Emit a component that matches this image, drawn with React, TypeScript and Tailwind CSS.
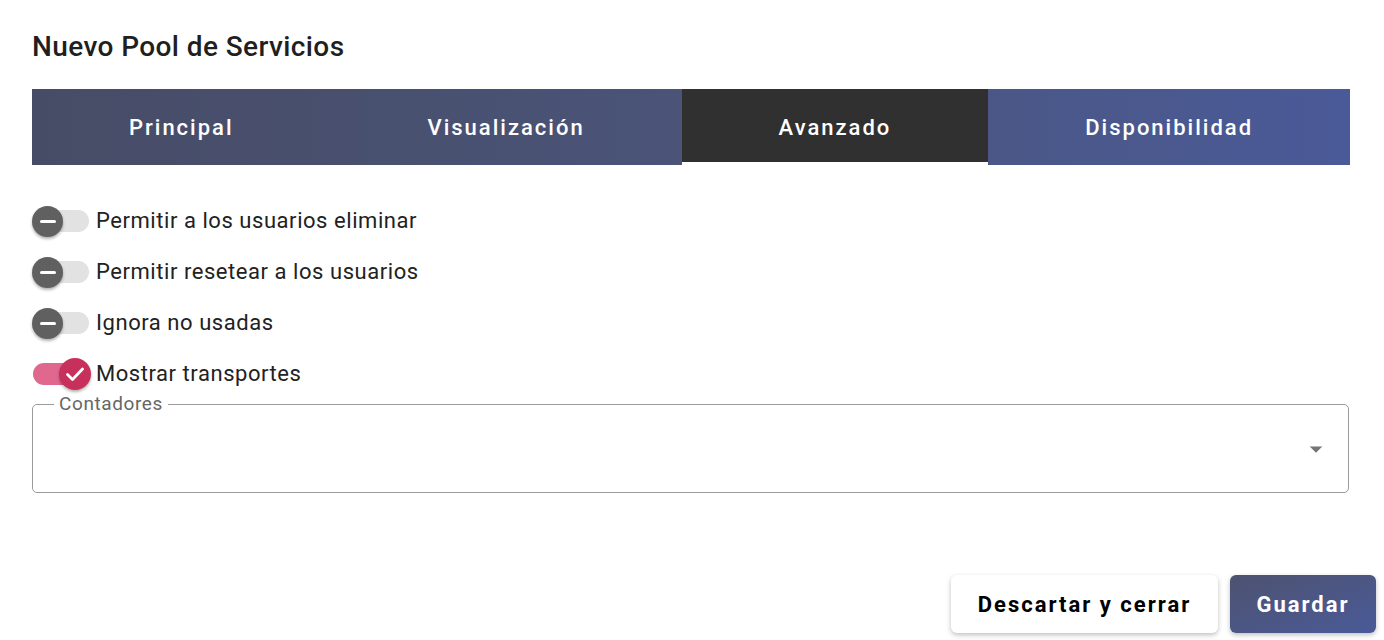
import { useState } from "react";

const TABS = ["Principal", "Visualización", "Avanzado", "Disponibilidad"];

const OPTIONS = [
  { label: "Permitir a los usuarios eliminar", on: false },
  { label: "Permitir resetear a los usuarios", on: false },
  { label: "Ignora no usadas", on: false },
  { label: "Mostrar transportes", on: true },
];

function Toggle({ on, onClick }: { on: boolean; onClick: () => void }) {
  return (
    <button
      type="button"
      onClick={onClick}
      className="relative w-[58px] h-[32px] shrink-0 flex items-center"
    >
      <span
        className={
          on
            ? "absolute left-[1px] w-[52px] h-[22px] rounded-full bg-[#e0688f]"
            : "absolute left-[1px] w-[56px] h-[22px] rounded-full bg-[#e2e2e2]"
        }
      />
      {on ? (
        <span className="absolute left-[27px] w-[32px] h-[32px] rounded-full bg-[#c8305c] shadow-[0_2px_3px_rgba(0,0,0,0.3)] flex items-center justify-center">
          <svg width="24" height="24" viewBox="0 0 24 24">
            <path
              d="M4.5 12.5l5 5L19.5 7"
              fill="none"
              stroke="white"
              strokeWidth="2.8"
              strokeLinecap="round"
              strokeLinejoin="round"
            />
          </svg>
        </span>
      ) : (
        <span className="absolute left-0 w-[31px] h-[31px] rounded-full bg-[#606060] shadow-[0_2px_3px_rgba(0,0,0,0.3)] flex items-center justify-center">
          <span className="w-[16px] h-[3px] rounded-full bg-white" />
        </span>
      )}
    </button>
  );
}

export default function App() {
  const [active, setActive] = useState(2);
  const [opts, setOpts] = useState(OPTIONS.map((o) => o.on));

  return (
    <div
      className="w-[1384px] h-[640px] bg-white px-8 text-[#212121]"
      style={{ fontFamily: "Roboto, 'Liberation Sans', sans-serif" }}
    >
      <h1 className="pt-[30px] text-[28px] leading-[34px] font-medium tracking-[0.4px] text-[#1f1f1f]">
        Nuevo Pool de Servicios
      </h1>

      <div className="mt-[25px] mr-[2px] flex h-[76px] bg-gradient-to-r from-[#474c66] via-[#4a5478] to-[#4a5a98]">
        {TABS.map((tab, i) => (
          <button
            key={tab}
            type="button"
            onClick={() => setActive(i)}
            className={
              i === active
                ? "flex-auto flex items-center justify-center bg-[#303030] shadow-[inset_0_-3px_0_#ffffff] text-white text-[22px] font-medium tracking-[2px]"
                : "flex-auto flex items-center justify-center text-white text-[22px] font-medium tracking-[2px]"
            }
          >
            {tab}
          </button>
        ))}
      </div>

      <div className="mt-[40px] flex flex-col gap-[19px]">
        {OPTIONS.map((o, i) => (
          <div key={o.label} className="flex items-center h-[32px]">
            <Toggle
              on={opts[i]}
              onClick={() =>
                setOpts((prev) => prev.map((v, j) => (j === i ? !v : v)))
              }
            />
            <span className="ml-[6px] text-[22px] leading-[26px] tracking-[0.55px] text-[#222]">
              {o.label}
            </span>
          </div>
        ))}
      </div>

      <fieldset className="mt-[4px] mr-[3px] h-[99px] border border-[#9a9a9a] rounded-[5px] px-[20px] flex items-center justify-end">
        <legend className="ml-[1px] px-[5px] text-[19px] leading-[20px] text-[#666] tracking-[0.6px]">
          Contadores
        </legend>
        <svg width="30" height="30" viewBox="0 0 24 24" className="-mt-[8px] -mr-[3px]">
          <path d="M7 10l5 5 5-5z" fill="#757575" />
        </svg>
      </fieldset>

      <div className="mt-[82px] -mr-6 flex justify-end gap-[12px]">
        <button
          type="button"
          className="w-[267px] h-[58px] rounded-[6px] bg-white shadow-[0_2px_5px_rgba(0,0,0,0.25)] text-[22px] font-bold tracking-[2px] text-black"
        >
          Descartar y cerrar
        </button>
        <button
          type="button"
          className="w-[146px] h-[58px] rounded-[6px] bg-gradient-to-br from-[#4d5270] to-[#4a5a98] shadow-[0_2px_5px_rgba(0,0,0,0.25)] text-[22px] font-bold tracking-[2px] text-white"
        >
          Guardar
        </button>
      </div>
    </div>
  );
}
